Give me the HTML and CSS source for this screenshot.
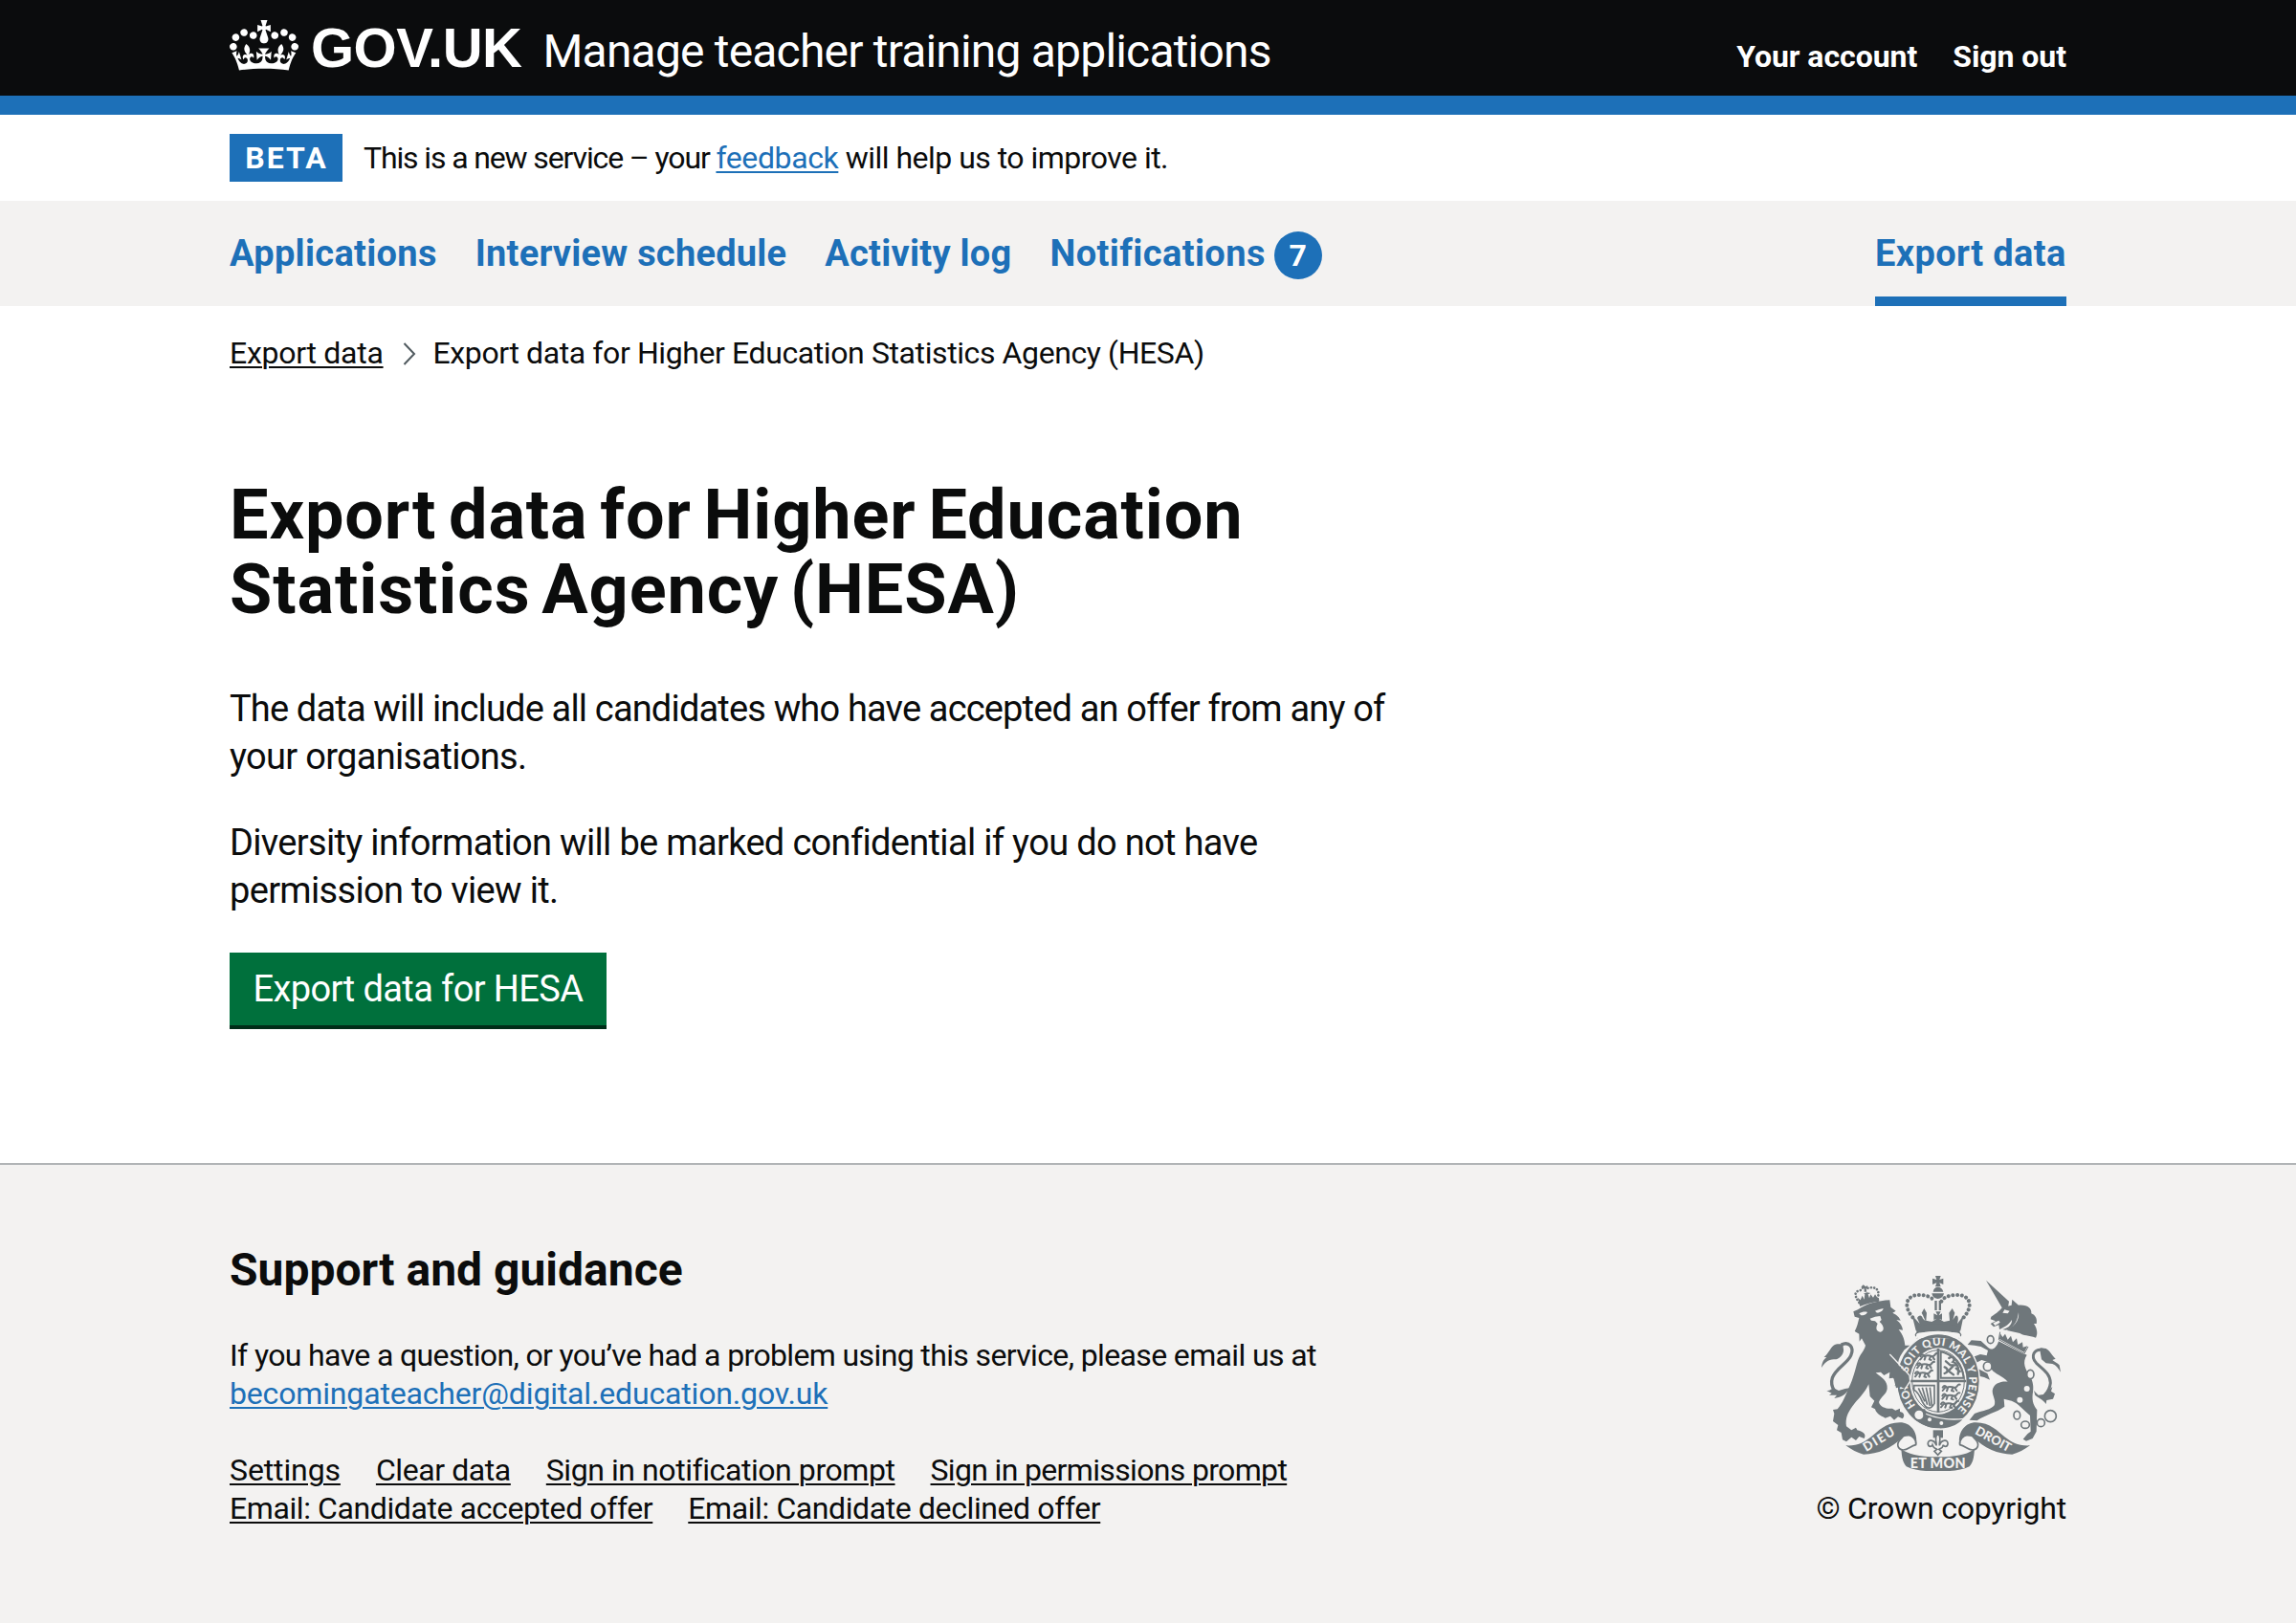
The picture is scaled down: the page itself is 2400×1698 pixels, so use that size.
FILE: index.html
```
<!DOCTYPE html>
<html lang="en">
<head>
<meta charset="utf-8">
<title>Export data for Higher Education Statistics Agency (HESA)</title>
<link rel="stylesheet" href="styles.css">
</head>
<body>
<header class="header">
  <div class="container header-row">
    <svg class="crown" viewBox="0 0 132 97" preserveAspectRatio="none" aria-hidden="true"><path fill="currentColor" fill-rule="evenodd" d="M25 30.2c3.5 1.5 7.7-.2 9.1-3.7 1.5-3.6-.2-7.8-3.9-9.2-3.6-1.4-7.6.3-9.1 3.9-1.4 3.5.3 7.5 3.9 9zM9 39.5c3.6 1.5 7.8-.2 9.2-3.7 1.5-3.6-.2-7.8-3.9-9.1-3.6-1.5-7.6.2-9.1 3.8-1.4 3.5.3 7.5 3.8 9zM4.4 57.2c3.5 1.5 7.7-.2 9.1-3.8 1.5-3.6-.2-7.7-3.9-9.1-3.5-1.5-7.6.3-9.1 3.8-1.4 3.5.3 7.6 3.9 9.1zm38.3-21.4c3.5 1.5 7.7-.2 9.1-3.8 1.5-3.6-.2-7.7-3.9-9.1-3.6-1.5-7.6.3-9.1 3.8-1.3 3.6.4 7.7 3.9 9.1zm64.4-5.6c-3.6 1.5-7.8-.2-9.1-3.7-1.5-3.6.2-7.8 3.8-9.2 3.6-1.4 7.7.3 9.2 3.9 1.3 3.5-.4 7.5-3.9 9zm15.9 9.3c-3.6 1.5-7.7-.2-9.1-3.7-1.5-3.6.2-7.8 3.7-9.1 3.6-1.5 7.7.2 9.2 3.8 1.5 3.5-.3 7.5-3.8 9zm4.7 17.7c-3.6 1.5-7.8-.2-9.2-3.8-1.5-3.6.2-7.7 3.9-9.1 3.6-1.5 7.7.3 9.2 3.8 1.3 3.5-.4 7.6-3.9 9.1zM89.3 35.8c-3.6 1.5-7.8-.2-9.2-3.8-1.4-3.6.2-7.7 3.9-9.1 3.6-1.5 7.7.3 9.2 3.8 1.4 3.6-.3 7.7-3.9 9.1zM69.7 17.7l8.9 4.7V9.3l-8.9 2.8c-.2-.3-.5-.6-.9-.9L72.4 0H59.6l3.5 11.2c-.3.3-.6.5-.9.9l-8.8-2.8v13.1l8.8-4.7c.3.3.6.7.9.9l-5 15.4v.1c-.2.8-.4 1.6-.4 2.4 0 4.1 3.1 7.5 7 8.1h.2c.3 0 .7.1 1 .1.4 0 .7 0 1-.1h.2c4-.6 7.1-4.1 7.1-8.1 0-.8-.1-1.7-.4-2.4V34l-5.1-15.4c.4-.2.7-.6 1-.9zM66 92.8c16.9 0 32.8 1.1 47.1 3.2 4-16.9 8.9-26.7 14-33.5l-9.6-3.4c1 4.9 1.1 7.2 0 10.2-1.5-1.4-3-4.3-4.2-8.7L108.6 76c2.8-2 5-3.2 7.5-3.3-4.4 9.4-10 11.9-13.6 11.2-4.3-.8-6.3-4.6-5.6-7.9 1-4.7 5.7-5.9 8-.5 4.3-8.7-3-11.4-7.6-8.8 7.1-7.2 7.9-13.5 2.1-21.1-8 6.1-8.1 12.3-4.5 20.8-4.7-5.4-12.1-2.5-9.5 6.2 3.4-5.2 7.9-2 7.2 3.1-.6 4.3-6.4 7.8-13.5 7.2-10.3-.9-10.9-8-11.2-13.8 2.5-.5 7.1 1.8 11 7.3L80.2 60c-4.1 4.4-8 5.3-12.3 5.4 1.4-4.4 8-11.6 8-11.6H55.5s6.4 7.2 7.9 11.6c-4.2-.1-8-1-12.3-5.4l1.4 16.4c3.9-5.5 8.5-7.7 10.9-7.3-.3 5.8-.9 12.8-11.1 13.8-7.2.6-12.9-2.9-13.5-7.2-.7-5 3.8-8.3 7.1-3.1 2.7-8.7-4.6-11.6-9.4-6.2 3.7-8.5 3.6-14.7-4.6-20.8-5.8 7.6-5 13.9 2.2 21.1-4.7-2.6-11.9.1-7.7 8.8 2.3-5.5 7.1-4.2 8.1.5.7 3.3-1.3 7.1-5.7 7.9-3.5.7-9-1.8-13.5-11.2 2.5.1 4.7 1.3 7.5 3.3l-4.7-15.4c-1.2 4.4-2.7 7.2-4.3 8.7-1.1-3-.9-5.3 0-10.2l-9.5 3.4c5 6.9 9.9 16.7 14 33.5 14.8-2.1 30.8-3.2 47.7-3.2z"/></svg>
    <span class="logotype">GOV.UK</span>
    <span class="service-name">Manage teacher training applications</span>
    <nav class="account">
      <a class="account-link">Your account</a>
      <a class="account-link">Sign out</a>
    </nav>
  </div>
</header>

<div class="container phase">
  <strong class="tag">BETA</strong>
  <p class="phase-text"><span class="phase-lead">This is a new service – your </span><a class="link phase-link">feedback</a><span class="phase-tail"> will help us to improve it.</span></p>
</div>

<nav class="primary">
  <div class="container primary-row">
    <a class="nav-link nav-applications">Applications</a>
    <a class="nav-link nav-interviews">Interview schedule</a>
    <a class="nav-link nav-activity">Activity log</a>
    <a class="nav-link nav-notifications">Notifications <span class="badge">7</span></a>
    <a class="nav-link nav-current">Export data</a>
  </div>
</nav>

<div class="container breadcrumbs">
  <a class="link-plain crumb">Export data</a>
  <svg class="chevron" viewBox="0 0 14 24" aria-hidden="true"><path d="M1.5 1 12 12 1.5 23" fill="none" stroke="#505a5f" stroke-width="2"/></svg>
  <span class="crumb-current">Export data for Higher Education Statistics Agency (HESA)</span>
</div>

<main class="container main">
  <h1 class="title">Export data for Higher Education<br><span class="title-second">Statistics Agency (HESA)</span></h1>
  <p class="body">The data will include all candidates who have accepted an offer from any of<br><span class="body-end">your organisations.</span></p>
  <p class="body body-diversity">Diversity information will be marked confidential if you do not have<br>permission to view it.</p>
  <button class="button" type="button">Export data for HESA</button>
</main>

<footer class="footer">
  <div class="container footer-row">
    <div class="support">
      <h2 class="footer-title">Support and guidance</h2>
      <p class="footer-text">If you have a question, or you’ve had a problem using this service, please email us at<br><a class="link email">becomingateacher@digital.education.gov.uk</a></p>
      <div class="footer-links">
        <a class="link-plain settings">Settings</a>
        <a class="link-plain clear">Clear data</a>
        <a class="link-plain notif">Sign in notification prompt</a>
        <a class="link-plain perms">Sign in permissions prompt</a>
      </div>
      <div class="footer-links">
        <a class="link-plain">Email: Candidate accepted offer</a>
        <a class="link-plain">Email: Candidate declined offer</a>
      </div>
    </div>
    <div class="copyright">
      <svg class="arms" viewBox="72 72 750 612" aria-hidden="true">
        <defs>
          <path id="garter" d="M438 514A97 112 0 0 1 438 290A97 112 0 0 1 438 514"/>
          <g id="walker" fill="none" stroke="#6f777b" stroke-width="6" stroke-linecap="round" stroke-linejoin="round">
            <path d="M4 12c4-8 10-6 12 0 8-3 16-3 26 1M12 12l-8 10M20 14l-3 9M36 13l-4 9 6 2M42 13l6 9M44 12c8-2 6-12 14-9"/>
          </g>
        </defs>

        <!-- lion -->
        <g fill="#6f777b">
          <path d="M172 184 186 178C215 158 250 150 286 148L289 170 305 182 295 188C310 195 316 202 320 212L307 210C320 220 326 232 327 242L314 240C328 258 332 272 334 290L350 290 332 304C322 318 314 330 312 346L344 392 346 404 330 408 338 424 326 416 322 428 310 412 302 418 306 398 296 392 284 394 286 374 268 384 258 374 242 376C262 392 280 402 278 426C276 444 258 450 252 468C256 484 276 490 294 488L304 494 318 488 318 498C332 500 334 512 326 520L312 514 300 524 288 512 272 518C256 510 244 504 240 490L228 484 238 464 224 450 220 412C208 440 186 458 168 482C154 502 146 520 150 544L166 556 180 548 184 556C208 562 212 572 206 582L190 576 180 588 166 578 150 592 138 586 134 564 120 556 124 540 108 528 112 504 108 492 122 490C140 468 146 450 158 422C172 394 178 364 186 338C192 318 206 308 210 290L198 268 191 278 190 254 176 246C184 232 186 220 190 204L176 200Z"/>
          <path d="M72 360C74 340 80 334 88 328L80 326C94 316 98 300 110 290 120 282 132 288 140 284L140 296C146 316 130 330 118 334 98 334 86 338 72 360Z"/>
          <path d="M88 432C98 434 104 426 110 424L126 432 146 426 160 424C146 448 132 454 112 456L120 446 96 446 104 440Z"/>
        </g>
        <path d="M134 288C158 276 176 296 164 322 152 348 118 360 106 392 100 410 106 422 112 432" fill="none" stroke="#6f777b" stroke-width="10"/>
        <g fill="none" stroke="#6f777b" stroke-width="8" stroke-linecap="round" stroke-dasharray=".1 10">
          <path d="M190 156C174 132 172 118 204 116"/>
          <path d="M248 144C256 116 244 102 212 112"/>
        </g>
        <path d="M190 158C208 150 230 144 252 142L253 152C232 154 210 160 193 168ZM186 140 194 148 200 134 206 146 208 130 204 128 214 124 226 126 218 130 222 142 226 130 234 140 240 130 248 142 190 158ZM203 100 211 106 216 102 217 110 212 112 214 122 206 122 206 112 198 114 197 106Z" fill="#6f777b"/>
        <g fill="#f3f2f1"><path d="M190 190C200 184 210 184 216 186 212 194 204 196 196 196ZM240 182C250 178 258 176 266 174 264 184 252 188 246 188ZM224 206 240 200 256 198 260 210 254 216C270 230 270 246 256 248 242 246 242 234 248 222L240 214 228 212Z"/></g>

        <!-- unicorn -->
        <g fill="#6f777b">
          <path d="M588 86 660 152 656 176 638 172Z"/>
          <path d="M638 172 668 164 670 146 690 164C720 162 732 176 730 190 742 194 750 208 746 222L738 222C750 240 750 256 744 266 722 258 704 260 694 252L640 240C660 236 672 220 668 210 660 226 644 234 630 240L628 226 612 232 602 222 618 214 602 208 604 200C620 190 628 184 638 172Z"/>
          <path d="M628 276 716 320C700 344 712 366 726 386 736 404 738 420 734 444 732 466 738 480 748 492L746 560 734 582 714 590 704 584 718 568 728 560 726 510C702 490 690 472 668 464L644 458 646 482C622 500 588 506 560 526L536 524 552 504C580 494 604 492 614 478 620 462 608 450 608 432 612 408 636 402 656 404 640 386 616 380 606 366L602 344 574 336 558 344 564 364 592 378 600 398 582 390 566 386 546 356 544 328 570 318 590 322 594 306 572 294 552 290 530 288 542 274 572 276 594 296C604 306 618 304 628 276Z"/>
          <path d="M822 374 818 352C812 344 802 342 796 336L806 332C794 322 788 306 776 300L758 298 758 312 762 334 776 346 796 348C808 352 814 362 822 374Z"/>
          <path d="M738 432 752 446 768 444 796 420 792 434 804 442 798 458 778 462 776 474C768 460 754 456 742 446Z"/>
        </g>
        <path d="M766 304C738 300 726 324 746 346 768 366 790 380 790 408 788 426 780 438 772 446" fill="none" stroke="#6f777b" stroke-width="9"/>
        <g fill="#f3f2f1">
          <path d="M662 182 646 178 640 188 656 190ZM610 220 628 212 632 218 616 228ZM690 186C694 214 672 236 650 242L640 248 718 290 708 318 626 276 634 244 644 246C672 236 686 220 690 186Z"/>
          <circle cx="716" cy="426" r="9"/><circle cx="694" cy="461" r="9"/>
        </g>
        <path d="M632 248 628 272 708 316 720 294" fill="none" stroke="#6f777b" stroke-width="3"/>
        <path d="M632 252 640 264 648 254 656 272 666 260 672 280 684 268 688 288 702 280 704 296 718 292 708 312 630 270Z" fill="#6f777b"/>
        <g fill="none" stroke="#6f777b" stroke-width="5">
          <ellipse cx="602" cy="272" rx="10" ry="12"/><ellipse cx="593" cy="356" rx="13" ry="14" fill="#f3f2f1"/><ellipse cx="727" cy="381" rx="11" ry="14" fill="#f3f2f1"/><ellipse cx="685" cy="509" rx="10" ry="13"/><ellipse cx="711" cy="539" rx="13" ry="11"/><ellipse cx="760" cy="533" rx="12" ry="12"/><circle cx="790" cy="512" r="18"/>
        </g>

        <!-- garter and shield -->
        <ellipse cx="438" cy="402" rx="130" ry="149" fill="#6f777b" stroke="#f3f2f1" stroke-width="4"/>
        <ellipse cx="438" cy="402" rx="89" ry="104" fill="#f3f2f1"/>
        <ellipse cx="438" cy="402" rx="82" ry="97" fill="none" stroke="#6f777b" stroke-width="3"/>
        <path d="M438 300V500M350 402H526" stroke="#6f777b" stroke-width="8"/>
        <path d="M446 310V392H518C514 352 486 318 446 310Z" fill="none" stroke="#6f777b" stroke-width="6"/>
        <g>
          <use href="#walker" x="378" y="312"/><use href="#walker" x="368" y="339"/><use href="#walker" x="362" y="366"/>
          <use href="#walker" x="448" y="410"/><use href="#walker" x="447" y="436"/><use href="#walker" x="443" y="462"/>
        </g>
        <path d="M458 378C472 374 468 362 458 358M462 340 476 352 494 352M472 330C484 320 492 334 484 342 498 346 504 358 500 380M484 356 470 370 486 382M494 362 506 372" fill="none" stroke="#6f777b" stroke-width="7" stroke-linecap="round"/>
        <path d="M362 416H426V472C410 500 396 482 388 466 380 448 372 434 362 430ZM376 424 396 466M388 422 404 476M400 422 412 480M412 422 418 480" fill="none" stroke="#6f777b" stroke-width="5"/>
        <path d="M352 502C380 480 410 530 516 520 500 540 470 552 438 550 400 550 372 532 352 502Z" fill="#6f777b"/>
        <path d="M384 498C420 516 470 526 520 520" fill="none" stroke="#f3f2f1" stroke-width="4"/>
        <circle cx="378" cy="508" r="17" fill="#f3f2f1" stroke="#6f777b" stroke-width="6"/><path d="M392 490 400 530" stroke="#6f777b" stroke-width="9"/>
        <circle cx="411" cy="523" r="6" fill="#f3f2f1"/><circle cx="448" cy="534" r="6" fill="#f3f2f1"/>
        <g class="motto" fill="#f3f2f1">
          <text font-size="34"><textPath href="#garter" startOffset="82" textLength="509">HONI SOIT QUI MAL Y PENSE</textPath></text>
        </g>
        <path d="M284 320 326 366 346 384 348 404 332 426 320 420 306 424 298 392Z" fill="#6f777b"/>
        <path d="M286 318 328 362 348 384 350 402 332 430" fill="none" stroke="#f3f2f1" stroke-width="4"/>

        <!-- crown over the shield -->
        <g fill="#6f777b">
          <path d="M429 72H446L442 84 454 80V99L442 94 446 106H429L433 94 420 99V80L433 84ZM422 122C424 102 450 102 454 122ZM418 127H456C454 138 446 144 437 144 428 144 420 138 418 127ZM427 150H434V180H427ZM440 150H447V180H440Z"/>
          <path d="M356 196 380 222 372 204C380 192 386 196 390 206L398 214 390 196 386 188 394 174 402 188 400 212 418 216 434 206 424 210V190L436 196 430 184H446L440 196 450 190V210L440 206 456 216 474 212 472 188 482 174 490 188 484 210 492 198C498 192 504 202 498 222L518 196 508 244H368Z"/>
          <path d="M368 232C410 220 464 220 508 232L504 262C460 242 414 242 372 262Z"/>
        </g>
        <g fill="none" stroke="#6f777b" stroke-width="12" stroke-linecap="round" stroke-dasharray=".1 14">
          <path d="M358 202C328 168 336 132 378 132 400 132 418 138 427 152"/>
          <path d="M518 202C548 168 540 132 498 132 474 132 456 138 448 152"/>
        </g>
        <path d="M372 268C356 246 380 246 438 246 496 246 520 246 504 268" fill="#f3f2f1" stroke="#6f777b" stroke-width="4"/>
        <path d="M366 270C372 256 400 249 438 249 476 249 504 256 510 270" fill="none" stroke="#f3f2f1" stroke-width="7"/>
        <path d="M362 290C380 266 410 256 438 256 466 256 496 266 514 290 492 272 466 266 438 266 410 266 384 272 362 290Z" fill="#6f777b"/>

        <!-- scroll -->
        <path d="M422 556H453V580H422Z" fill="#6f777b"/>
        <path d="M437 566C424 580 434 592 432 604 426 584 404 584 406 600 408 610 418 608 420 602 424 614 430 612 434 616L426 622 437 634 448 622 440 616C446 612 452 614 454 602 456 608 466 610 468 600 470 584 448 584 442 604 440 592 450 580 437 566Z" fill="#f3f2f1" stroke="#6f777b" stroke-width="5"/>
        <g id="ribbon-end">
          <path d="M148 604C186 606 204 594 226 578 250 560 272 532 318 532 352 532 372 562 370 592 360 574 338 568 326 580 290 612 250 632 204 632 184 628 166 616 148 604Z" fill="#6f777b"/>
          <path d="M324 580C302 600 312 616 328 618 344 618 350 606 368 602 372 588 356 570 344 572 332 572 326 576 324 580Z" fill="#f3f2f1" stroke="#6f777b" stroke-width="5"/>
        </g>
        <use href="#ribbon-end" transform="translate(874 0) scale(-1 1)"/>
        <path d="M322 614C340 630 376 640 437 640 498 640 534 630 552 614 550 640 548 656 536 670 508 684 470 685 437 685 404 685 366 684 338 670 326 656 324 640 322 614Z" fill="#6f777b"/>
        <g class="motto" fill="#f3f2f1">
          <text font-size="43" x="350" y="676" textLength="174">ET MON</text>
          <text font-size="39" textLength="108" transform="translate(212 624) rotate(-31)">DIEU</text>
          <text font-size="39" textLength="122" transform="translate(551 566) rotate(29)">DROIT</text>
        </g>
      </svg>
      <span class="copyright-text">© Crown copyright</span>
    </div>
  </div>
</footer>
</body>
</html>
```
FILE: styles.css
```
* { box-sizing: border-box; }
body {
  margin: 0;
  min-height: 1698px;
  padding-bottom: 1px;
  display: flex;
  flex-direction: column;
  background: #fff;
  color: #0b0c0c;
  font: 400 32px/40px Roboto, "Liberation Sans", sans-serif;
  letter-spacing: -.4px;
}
h1, h2, p { margin: 0; }
a { text-decoration: none; white-space: nowrap; }
.container { width: 1920px; margin: 0 auto; }
.link, .link-plain {
  text-decoration: underline;
  text-decoration-thickness: 2px;
  text-underline-offset: 3px;
}
.link { color: #1d70b8; }
.link-plain { color: #0b0c0c; }

.header { height: 120px; padding-top: 20px; background: #0b0c0d; border-bottom: 20px solid #1d70b8; color: #fff; }
.header-row { display: flex; align-items: baseline; line-height: 60px; }
.crown { align-self: flex-start; width: 72px; height: 53px; margin-top: 1px; }
.logotype { margin-left: 13px; font: 700 58px/60px "Liberation Sans", Arial, sans-serif; letter-spacing: -.5px; }
.service-name { margin-left: 22px; font-size: 48px; letter-spacing: -.81px; }
.account { display: flex; gap: 37px; margin-left: auto; font-weight: 700; letter-spacing: -.05px; }

.phase { height: 90px; display: flex; align-items: center; gap: 22px; }
.tag { width: 118px; height: 50px; background: #1d70b8; color: #fff; text-align: center; line-height: 50px; letter-spacing: 2px; padding-left: 1px; }
.phase-lead { letter-spacing: -1.13px; }
.phase-link { letter-spacing: -.4px; }
.phase-tail { letter-spacing: -.52px; }

.primary { background: #f3f2f1; }
.primary-row { height: 110px; display: flex; gap: 40px; font-size: 38px; font-weight: 700; line-height: 50px; }
.nav-link { padding: 30px 0; color: #1d70b8; }
.nav-applications { letter-spacing: .3px; }
.nav-interviews { letter-spacing: .22px; }
.nav-activity { letter-spacing: .25px; }
.nav-notifications { display: flex; gap: 9px; letter-spacing: .4px; }
.badge { width: 50px; height: 50px; margin-top: 2px; border-radius: 50%; background: #1d70b8; color: #fff; font-size: 32px; text-align: center; }
.nav-current { width: 200px; margin-left: auto; border-bottom: 10px solid #1d70b8; letter-spacing: .38px; }

.breadcrumbs { display: flex; align-items: center; padding-top: 29px; }
.crumb { letter-spacing: -.28px; }
.chevron { width: 14px; height: 24px; margin: 2px 18px 0 20px; }

.main { flex: 1; padding-top: 111px; }
.title { font-size: 72px; line-height: 78px; letter-spacing: .9px; word-spacing: -6px; }
.title-second { letter-spacing: .9px; word-spacing: -7px; }
.body { margin-top: 60px; font-size: 38px; line-height: 50px; letter-spacing: -.83px; }
.body-end { letter-spacing: -.68px; }
.body-diversity { margin-top: 40px; letter-spacing: -.67px; }
.button { display: block; width: 394px; height: 76px; margin-top: 40px; padding: 0; border: 0; background: #00703c; box-shadow: 0 4px 0 #002d18; color: #fff; font: 400 38px/50px Roboto, sans-serif; letter-spacing: -.6px; }

.footer { height: 481px; padding-top: 80px; background: #f3f2f1; border-top: 2px solid #b1b4b6; }
.footer-row { display: flex; justify-content: space-between; }
.footer-title { font-size: 48px; line-height: 60px; letter-spacing: 0; }
.footer-text { margin: 39px 0 40px; letter-spacing: -.63px; }
.email { letter-spacing: -.16px; }
.footer-links { display: flex; gap: 37px; }
.settings { letter-spacing: -.12px; }
.clear { letter-spacing: -.42px; }
.notif { letter-spacing: -.43px; }
.perms { letter-spacing: -.66px; }
.copyright { padding-top: 36px; display: flex; flex-direction: column; align-items: flex-end; letter-spacing: -.2px; }
.arms { width: 250px; height: 204px; margin: 0 6px 19px 0; }
.motto { font-family: Lato, sans-serif; font-weight: 900; letter-spacing: 0; }
```
